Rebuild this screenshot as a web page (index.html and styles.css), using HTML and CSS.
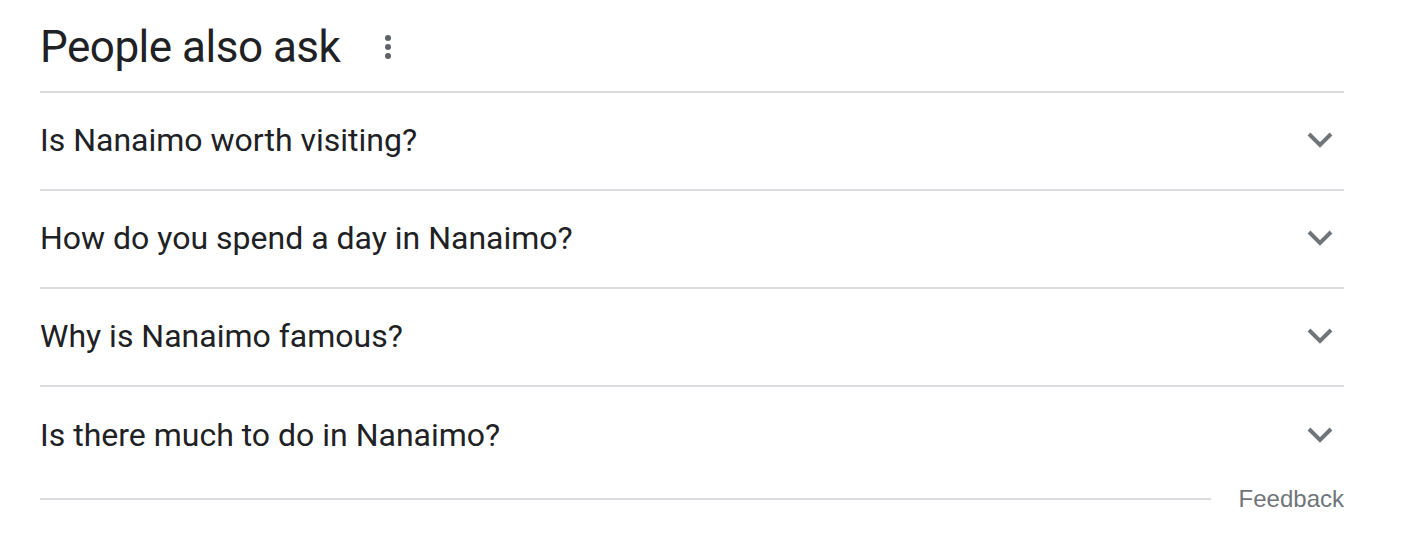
FILE: index.html
```html
<!DOCTYPE html>
<html>
<head>
<meta charset="utf-8">
<link rel="stylesheet" href="styles.css">
</head>
<body>
<div class="paa">
  <div class="head">
    <h2 class="title">People also ask</h2>
    <span class="more">
      <svg width="12" height="28" viewBox="0 0 12 28"><circle cx="6" cy="5" r="3" fill="#5f6368"/><circle cx="6" cy="14" r="3" fill="#5f6368"/><circle cx="6" cy="23" r="3" fill="#5f6368"/></svg>
    </span>
  </div>
  <div class="list">
    <div class="row"><span class="q">Is Nanaimo worth visiting?</span><svg class="chev" width="28" height="18" viewBox="0 0 28 18"><path d="M3 3 L14 14 L25 3" fill="none" stroke="#70757a" stroke-width="4"/></svg></div>
    <div class="row"><span class="q">How do you spend a day in Nanaimo?</span><svg class="chev" width="28" height="18" viewBox="0 0 28 18"><path d="M3 3 L14 14 L25 3" fill="none" stroke="#70757a" stroke-width="4"/></svg></div>
    <div class="row"><span class="q">Why is Nanaimo famous?</span><svg class="chev" width="28" height="18" viewBox="0 0 28 18"><path d="M3 3 L14 14 L25 3" fill="none" stroke="#70757a" stroke-width="4"/></svg></div>
    <div class="row last"><span class="q">Is there much to do in Nanaimo?</span><svg class="chev" width="28" height="18" viewBox="0 0 28 18"><path d="M3 3 L14 14 L25 3" fill="none" stroke="#70757a" stroke-width="4"/></svg></div>
  </div>
  <div class="foot">
    <div class="line"></div>
    <span class="fb">Feedback</span>
  </div>
</div>
</body>
</html>
```
FILE: styles.css
```css
html, body { margin: 0; padding: 0; background: #fff; }
body { font-family: Roboto, "Open Sans", sans-serif; color: #202124; }
.paa { width: 1304px; margin-left: 40px; }
.head { display: flex; align-items: center; box-sizing: border-box; height: 93px; padding-top: 3px; border-bottom: 2px solid #dadce0; }
.title { margin: 0; font-size: 44px; font-weight: 400; line-height: 56px; letter-spacing: -0.5px; }
.more { display: flex; margin-left: 42px; }
.row { display: flex; align-items: center; justify-content: space-between; box-sizing: border-box; height: 98px; padding-bottom: 2px; border-bottom: 2px solid #dadce0; }
.row.last { border-bottom: none; height: 97px; }
.q { font-size: 32px; line-height: 40px; }
.chev { margin-right: 10px; }
.foot { display: flex; align-items: center; height: 30px; }
.line { flex: 1; height: 2px; background: #dadce0; margin-right: 28px; }
.fb { font-family: "Liberation Sans", Arial, sans-serif; font-size: 24px; color: #70757a; }
```
